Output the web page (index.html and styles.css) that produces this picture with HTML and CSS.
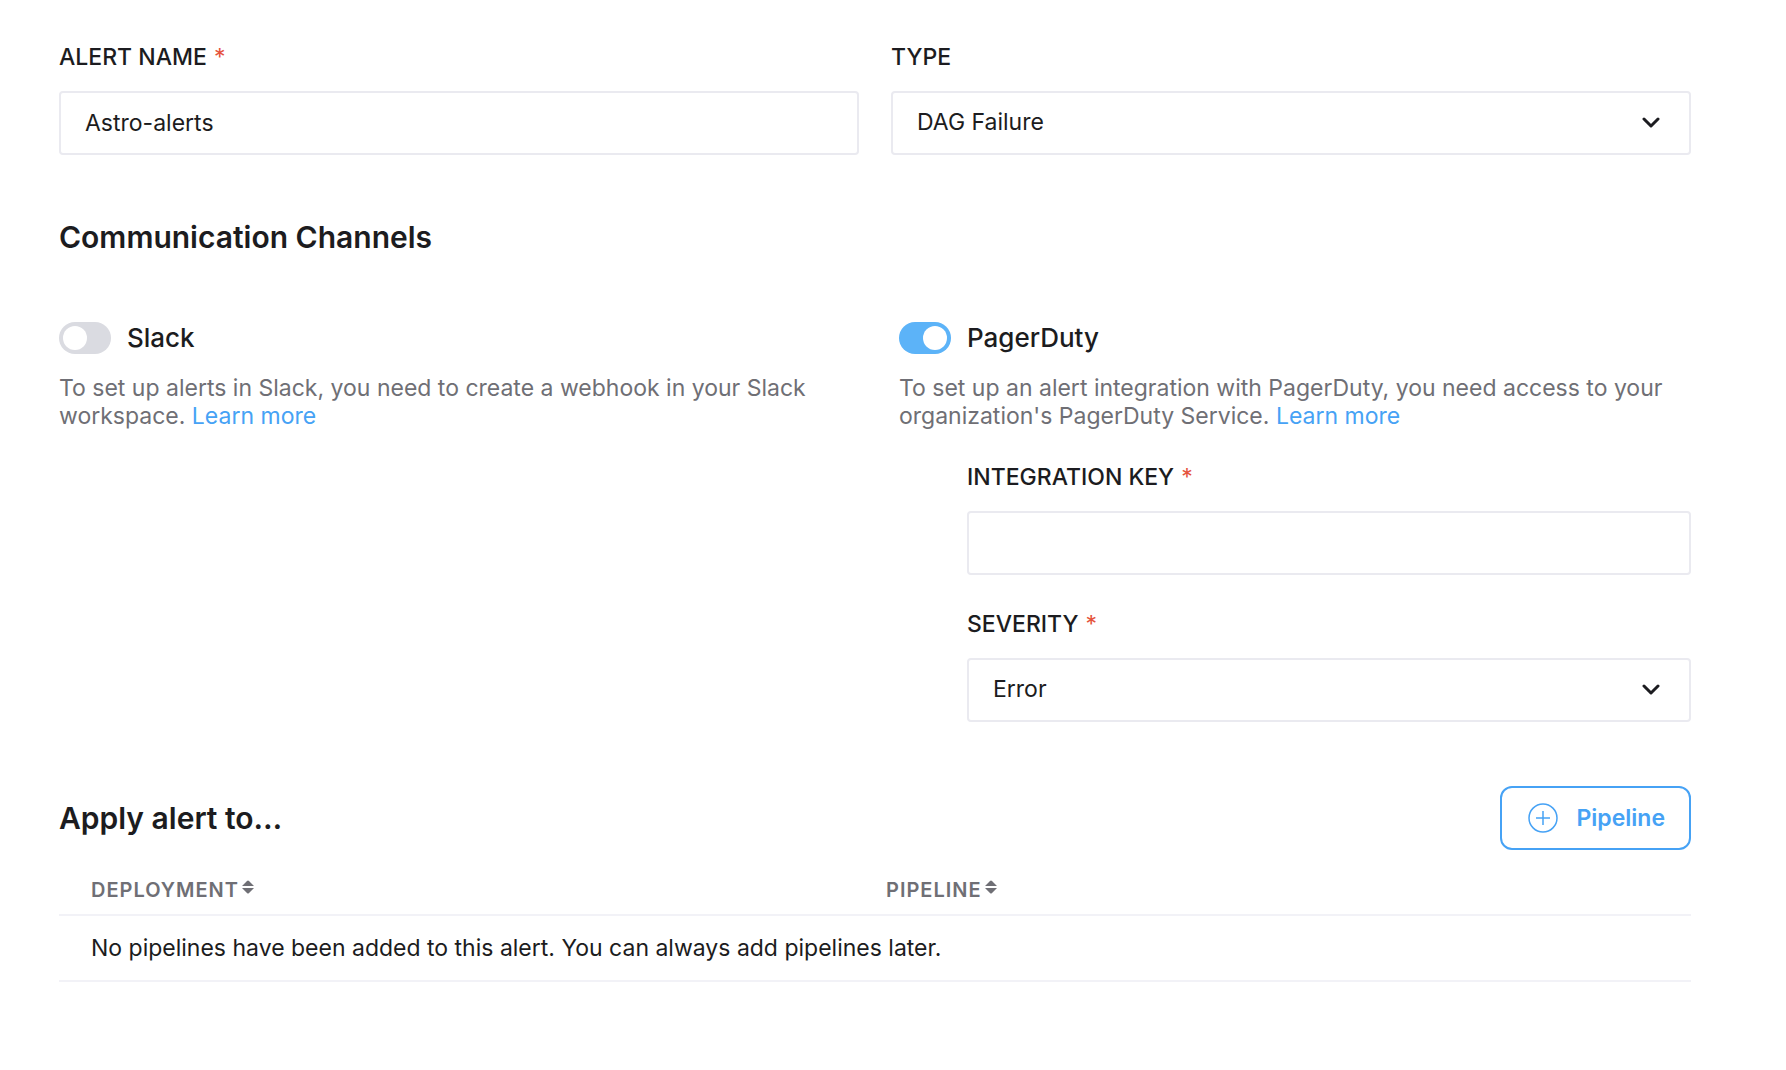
FILE: index.html
```html
<!DOCTYPE html>
<html lang="en">
<head>
<meta charset="utf-8">
<meta name="viewport" content="width=device-width, initial-scale=1">
<title>Alert</title>
<link rel="stylesheet" href="styles.css">
</head>
<body>
<main>
<form class="alert-form">
  <div class="basics">
    <div class="field">
      <label class="label" for="name">ALERT NAME <span class="required">*</span></label>
      <input class="control" id="name" type="text" value="Astro-alerts" required>
    </div>
    <div class="field">
      <label class="label" for="type">TYPE</label>
      <div class="select">
        <select class="control" id="type"><option>DAG Failure</option></select>
        <svg class="chevron" viewBox="0 0 18 12" aria-hidden="true"><path d="M2 2l7 7 7-7"/></svg>
      </div>
    </div>
  </div>

  <h2 class="heading">Communication Channels</h2>

  <div class="channels">
    <section>
      <label class="toggle"><input class="switch" type="checkbox"><span>Slack</span></label>
      <p class="help">To set up alerts in Slack, you need to create a webhook in your Slack workspace. <a class="link" href="#">Learn more</a></p>
    </section>
    <section>
      <label class="toggle"><input class="switch" type="checkbox" checked><span>PagerDuty</span></label>
      <p class="help">To set up an alert integration with PagerDuty, you need access to your organization's PagerDuty Service. <a class="link" href="#">Learn more</a></p>
      <div class="settings">
        <div class="field">
          <label class="label" for="key">INTEGRATION KEY <span class="required">*</span></label>
          <input class="control" id="key" type="text">
        </div>
        <div class="field">
          <label class="label" for="severity">SEVERITY <span class="required">*</span></label>
          <div class="select">
            <select class="control" id="severity"><option>Error</option></select>
            <svg class="chevron" viewBox="0 0 18 12" aria-hidden="true"><path d="M2 2l7 7 7-7"/></svg>
          </div>
        </div>
      </div>
    </section>
  </div>

  <div class="apply">
    <h2 class="heading">Apply alert to…</h2>
    <button class="add" type="button">
      <svg class="plus" viewBox="0 0 30 30" aria-hidden="true"><circle cx="15" cy="15" r="14"/><path d="M15 8v14M8 15h14"/></svg>
      <span>Pipeline</span>
    </button>
  </div>

  <table class="pipelines">
    <thead>
      <tr>
        <th scope="col"><span class="sortable">DEPLOYMENT<svg class="sort" viewBox="0 0 12 14" aria-hidden="true"><path d="M0 6l5-5q1-1 2 0l5 5zM0 8h12l-5 5q-1 1-2 0z"/></svg></span></th>
        <th scope="col"><span class="sortable">PIPELINE<svg class="sort" viewBox="0 0 12 14" aria-hidden="true"><path d="M0 6l5-5q1-1 2 0l5 5zM0 8h12l-5 5q-1 1-2 0z"/></svg></span></th>
      </tr>
    </thead>
    <tbody>
      <tr><td colspan="2">No pipelines have been added to this alert. You can always add pipelines later.</td></tr>
    </tbody>
  </table>
</form>
</main>
</body>
</html>
```
FILE: styles.css
```css
* {
  box-sizing: border-box;
}

body {
  margin: 0;
  background: #fff;
  color: #1c1c20;
  font-family: Inter, "Liberation Sans", sans-serif;
  font-size: 23px;
  line-height: 28px;
}

.alert-form {
  padding: 43px 95px 40px 59px;
}

.basics {
  display: grid;
  grid-template-columns: 1fr 1fr;
  gap: 32px;
}

.field {
  display: flex;
  flex-direction: column;
  gap: 20px;
}

.label {
  font-weight: 500;
}

.required {
  margin-left: 1px;
  color: #e5533c;
  font-weight: 400;
}

.control {
  display: block;
  width: 100%;
  height: 64px;
  padding: 0 24px;
  border: 2px solid #eaeaf0;
  border-radius: 4px;
  background: #fff;
  color: inherit;
  font: inherit;
  appearance: none;
}

.select {
  display: grid;
  align-items: center;
}

.select > * {
  grid-area: 1 / 1;
}

.select .control {
  padding-bottom: 2px;
}

.chevron {
  justify-self: end;
  width: 18px;
  height: 12px;
  margin-right: 31px;
  fill: none;
  stroke: #1c1c20;
  stroke-width: 3;
  stroke-linecap: round;
  stroke-linejoin: round;
  pointer-events: none;
}

.heading {
  margin: 0;
  font-size: 30px;
  font-weight: 600;
  line-height: 40px;
}

.basics + .heading {
  margin-top: 62px;
}

.channels {
  display: grid;
  grid-template-columns: 1fr 1fr;
  gap: 48px;
  margin-top: 65px;
}

.toggle {
  display: inline-flex;
  align-items: center;
  gap: 16px;
  font-size: 26px;
  font-weight: 500;
  line-height: 32px;
}

.switch {
  display: flex;
  align-items: center;
  width: 52px;
  height: 32px;
  margin: 0;
  padding: 0 4px;
  border-radius: 16px;
  background: #dadbe1;
  appearance: none;
}

.switch::before {
  content: "";
  width: 24px;
  height: 24px;
  border-radius: 12px;
  background: #fff;
}

.switch:checked {
  justify-content: flex-end;
  background: #5cb3f8;
}

.help {
  margin: 18px 0 0;
  color: #6f6f75;
}

.link {
  color: #46a2f5;
  text-decoration: none;
}

.settings {
  display: grid;
  gap: 35px;
  margin-top: 33px;
  padding-left: 68px;
}

.apply {
  display: flex;
  align-items: center;
  justify-content: space-between;
  margin-top: 64px;
}

.add {
  display: flex;
  align-items: center;
  gap: 18px;
  height: 64px;
  padding: 0 24px 0 26px;
  border: 2px solid #46a2f5;
  border-radius: 12px;
  background: #fff;
  color: #46a2f5;
  font: inherit;
  font-weight: 600;
}

.plus {
  width: 30px;
  height: 30px;
  fill: none;
  stroke: currentColor;
  stroke-width: 1.5;
}

.pipelines {
  width: 100%;
  margin-top: 14px;
  border-collapse: separate;
  border-spacing: 0;
  table-layout: fixed;
}

.pipelines th,
.pipelines td {
  padding: 0 32px;
  border-bottom: 2px solid #f2f2f7;
  text-align: left;
}

.pipelines th {
  height: 52px;
  padding-top: 2px;
  color: #6f6f75;
  font-size: 20px;
  font-weight: 600;
  letter-spacing: 1px;
}

.pipelines th + th {
  padding-left: 11px;
}

.pipelines td {
  height: 66px;
}

.sortable {
  display: flex;
  gap: 3px;
}

.sort {
  width: 12px;
  height: 14px;
  margin-top: 4px;
  fill: #6f6f75;
}
```
